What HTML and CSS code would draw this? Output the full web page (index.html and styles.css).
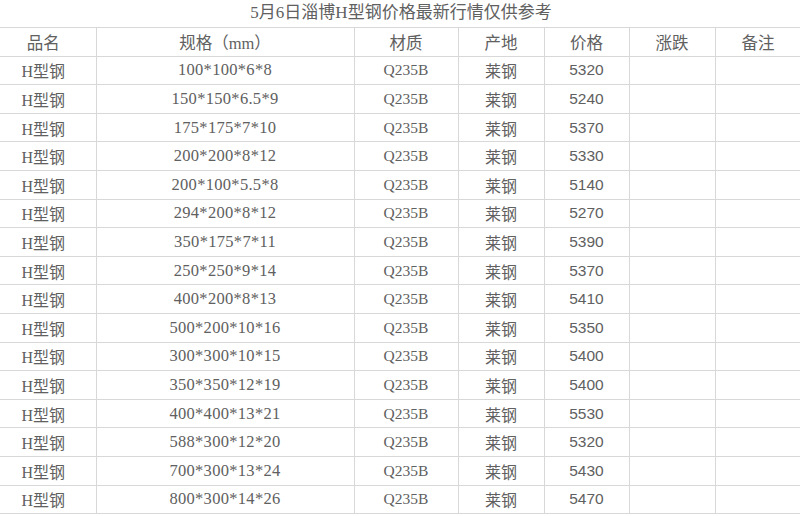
FILE: index.html
```html
<!DOCTYPE html>
<html lang="zh-CN">
<head>
<meta charset="utf-8">
<title>5月6日淄博H型钢价格最新行情仅供参考</title>
<link rel="stylesheet" href="styles.css">
</head>
<body>
<div class="page">
  <div class="title">5月6日淄博H型钢价格最新行情仅供参考</div>
  <table class="price">
    <colgroup>
      <col class="c1"><col class="c2"><col class="c3"><col class="c4"><col class="c5"><col class="c6"><col class="c7">
    </colgroup>
    <thead>
      <tr><th class="first">品名</th><th>规格（mm）</th><th>材质</th><th>产地</th><th>价格</th><th>涨跌</th><th>备注</th></tr>
    </thead>
    <tbody>
      <tr><td class="first">H型钢</td><td class="spec">100*100*6*8</td><td class="mat">Q235B</td><td>莱钢</td><td class="num">5320</td><td></td><td></td></tr>
      <tr><td class="first">H型钢</td><td class="spec">150*150*6.5*9</td><td class="mat">Q235B</td><td>莱钢</td><td class="num">5240</td><td></td><td></td></tr>
      <tr><td class="first">H型钢</td><td class="spec">175*175*7*10</td><td class="mat">Q235B</td><td>莱钢</td><td class="num">5370</td><td></td><td></td></tr>
      <tr><td class="first">H型钢</td><td class="spec">200*200*8*12</td><td class="mat">Q235B</td><td>莱钢</td><td class="num">5330</td><td></td><td></td></tr>
      <tr><td class="first">H型钢</td><td class="spec">200*100*5.5*8</td><td class="mat">Q235B</td><td>莱钢</td><td class="num">5140</td><td></td><td></td></tr>
      <tr><td class="first">H型钢</td><td class="spec">294*200*8*12</td><td class="mat">Q235B</td><td>莱钢</td><td class="num">5270</td><td></td><td></td></tr>
      <tr><td class="first">H型钢</td><td class="spec">350*175*7*11</td><td class="mat">Q235B</td><td>莱钢</td><td class="num">5390</td><td></td><td></td></tr>
      <tr><td class="first">H型钢</td><td class="spec">250*250*9*14</td><td class="mat">Q235B</td><td>莱钢</td><td class="num">5370</td><td></td><td></td></tr>
      <tr><td class="first">H型钢</td><td class="spec">400*200*8*13</td><td class="mat">Q235B</td><td>莱钢</td><td class="num">5410</td><td></td><td></td></tr>
      <tr><td class="first">H型钢</td><td class="spec">500*200*10*16</td><td class="mat">Q235B</td><td>莱钢</td><td class="num">5350</td><td></td><td></td></tr>
      <tr><td class="first">H型钢</td><td class="spec">300*300*10*15</td><td class="mat">Q235B</td><td>莱钢</td><td class="num">5400</td><td></td><td></td></tr>
      <tr><td class="first">H型钢</td><td class="spec">350*350*12*19</td><td class="mat">Q235B</td><td>莱钢</td><td class="num">5400</td><td></td><td></td></tr>
      <tr><td class="first">H型钢</td><td class="spec">400*400*13*21</td><td class="mat">Q235B</td><td>莱钢</td><td class="num">5530</td><td></td><td></td></tr>
      <tr><td class="first">H型钢</td><td class="spec">588*300*12*20</td><td class="mat">Q235B</td><td>莱钢</td><td class="num">5320</td><td></td><td></td></tr>
      <tr><td class="first">H型钢</td><td class="spec">700*300*13*24</td><td class="mat">Q235B</td><td>莱钢</td><td class="num">5430</td><td></td><td></td></tr>
      <tr><td class="first">H型钢</td><td class="spec">800*300*14*26</td><td class="mat">Q235B</td><td>莱钢</td><td class="num">5470</td><td></td><td></td></tr>
    </tbody>
  </table>
</div>
</body>
</html>
```
FILE: styles.css
```css
html, body {
  margin: 0;
  padding: 0;
  background: #ffffff;
}
.page {
  width: 800px;
  height: 516px;
  overflow: hidden;
  font-family: "Liberation Serif", "Noto Sans CJK SC", serif;
  color: #606060;
}
.title {
  height: 27px;
  line-height: 25px;
  text-align: center;
  font-size: 17px;
  color: #606060;
  padding-left: 2px;
}
.price {
  width: 801px;
  border-collapse: collapse;
  table-layout: fixed;
  font-size: 16px;
}
.c1 { width: 96px; }
.c2 { width: 258px; }
.c3 { width: 104px; }
.c4 { width: 86px; }
.c5 { width: 85px; }
.c6 { width: 86px; }
.c7 { width: 86px; }
.price th, .price td {
  border: 1px solid #d8d8d8;
  height: 27.6px;
  padding: 0;
  text-align: center;
  font-weight: normal;
  white-space: nowrap;
  vertical-align: middle;
}
.price th {
  font-size: 16.5px;
}
.price .first {
  border-left: none;
  padding-right: 9px;
}
.price .spec {
  font-size: 16.5px;
  letter-spacing: 0.3px;
}
.price .mat {
  font-size: 15.5px;
}
.price .num {
  font-family: "Liberation Sans", "Noto Sans CJK SC", sans-serif;
  font-size: 15.5px;
}
```
